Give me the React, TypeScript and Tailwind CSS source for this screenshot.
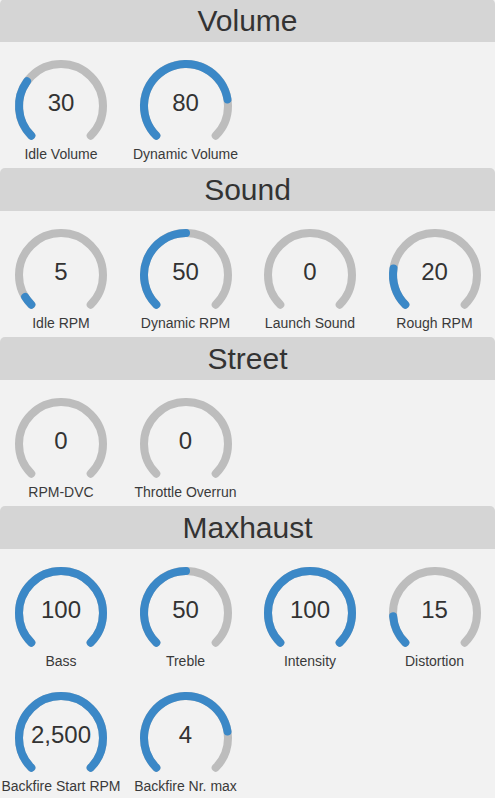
import React from 'react';

type Knob = { label: string; value: number; max: number; text?: string };

const sections: { title: string; knobs: Knob[] }[] = [
  {
    title: 'Volume',
    knobs: [
      { label: 'Idle Volume', value: 30, max: 100 },
      { label: 'Dynamic Volume', value: 80, max: 100 },
    ],
  },
  {
    title: 'Sound',
    knobs: [
      { label: 'Idle RPM', value: 5, max: 100 },
      { label: 'Dynamic RPM', value: 50, max: 100 },
      { label: 'Launch Sound', value: 0, max: 100 },
      { label: 'Rough RPM', value: 20, max: 100 },
    ],
  },
  {
    title: 'Street',
    knobs: [
      { label: 'RPM-DVC', value: 0, max: 100 },
      { label: 'Throttle Overrun', value: 0, max: 100 },
    ],
  },
  {
    title: 'Maxhaust',
    knobs: [
      { label: 'Bass', value: 100, max: 100 },
      { label: 'Treble', value: 50, max: 100 },
      { label: 'Intensity', value: 100, max: 100 },
      { label: 'Distortion', value: 15, max: 100 },
      { label: 'Backfire Start RPM', value: 2500, max: 2500, text: '2,500' },
      { label: 'Backfire Nr. max', value: 4, max: 5 },
    ],
  },
];

const R = 42;
const CY = 53;
const point = (deg: number) => {
  const a = (deg * Math.PI) / 180;
  return `${(50 + R * Math.sin(a)).toFixed(2)} ${(CY - R * Math.cos(a)).toFixed(2)}`;
};
const arc = (from: number, to: number) =>
  `M ${point(from)} A ${R} ${R} 0 ${to - from > 180 ? 1 : 0} 1 ${point(to)}`;

const Gauge: React.FC<{ knob: Knob }> = ({ knob }) => {
  const p = knob.value / knob.max;
  const end = -135 + 270 * p;
  return (
    <div className="w-[120px] h-[125px] flex flex-col items-center pt-[11px]">
      <div className="relative w-[100px] h-[92px]">
        <svg width="100" height="92" viewBox="0 0 100 92">
          <path d={arc(-135, 135)} fill="none" stroke="#bdbdbd" strokeWidth="8" strokeLinecap="round" />
          {p > 0 && (
            <path d={arc(-135, end)} fill="none" stroke="#3b88c7" strokeWidth="8" strokeLinecap="round" />
          )}
        </svg>
        <div className="absolute left-0 right-0 top-0 h-[100px] flex items-center justify-center text-[24px] text-[#333]">
          {knob.text ?? knob.value}
        </div>
      </div>
      <div className="text-[14px] leading-4 mt-px text-[#3a3a3a] whitespace-nowrap">{knob.label}</div>
    </div>
  );
};

export default function App() {
  return (
    <div
      className="min-h-screen bg-[#f2f2f2] -mt-px"
      style={{ fontFamily: '"Liberation Sans", Arial, sans-serif' }}
    >
      {sections.map((s) => (
        <div key={s.title} className="mb-px rounded-[5px] bg-[#f2f2f2]">
          <div className="h-[43px] rounded-t-[5px] bg-[#d5d5d5] flex items-center justify-center text-[30px] text-[#333]">
            {s.title}
          </div>
          <div className="flex flex-wrap gap-x-[4.5px] pl-px">
            {s.knobs.map((k) => (
              <Gauge key={k.label} knob={k} />
            ))}
          </div>
        </div>
      ))}
    </div>
  );
}
